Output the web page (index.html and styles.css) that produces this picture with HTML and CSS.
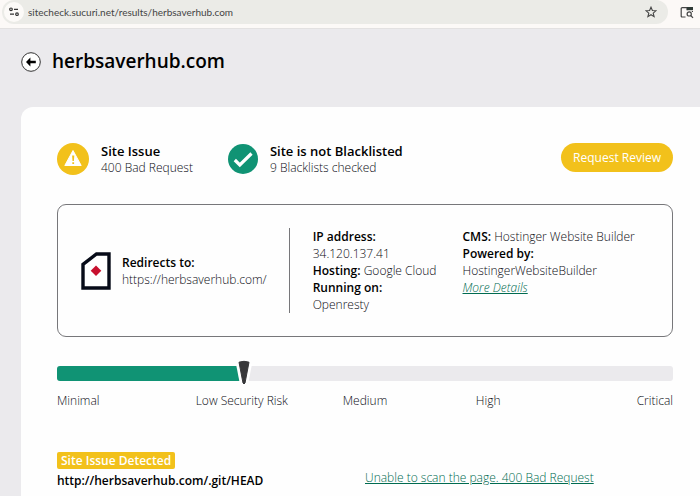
FILE: index.html
```html
<!DOCTYPE html>
<html lang="en">
<head>
<meta charset="utf-8">
<meta name="viewport" content="width=device-width, initial-scale=1">
<title>herbsaverhub.com</title>
<link rel="stylesheet" href="styles.css">
</head>
<body>
<header class="toolbar">
  <form class="omnibox">
    <button class="icon-button site-info" type="button" aria-label="View site information">
      <svg width="10" height="10" viewBox="0 0 10 10" fill="none" stroke="#333" stroke-width="1.2"><circle cx="2" cy="2.3" r="1.3"/><path d="M5 2.3h4M1 7.2h4"/><circle cx="8" cy="7.2" r="1.3"/></svg>
    </button>
    <input class="address" type="text" aria-label="Address" value="sitecheck.sucuri.net/results/herbsaverhub.com">
    <button class="icon-button" type="button" aria-label="Bookmark this page">
      <svg width="12" height="12" viewBox="0 0 12 12" fill="none" stroke="#444" stroke-width="1.1"><path d="M6 1.2 7.4 4.5 10.9 4.8 8.2 7.1 9.1 10.6 6 8.7 2.9 10.6 3.8 7.1 1.1 4.8 4.6 4.5Z"/></svg>
    </button>
  </form>
  <button class="icon-button" type="button" aria-label="Search this page">
    <svg width="14" height="13" viewBox="0 0 14 13" fill="none" stroke="#444" stroke-width="1.2"><path d="M5.5 11H2.2Q1.2 11 1.2 10V2.6Q1.2 1.6 2.2 1.6H12.4V4M7 1.6V4.2M12.4 5V6"/><path d="M7 1H13V4.2H7Z" fill="#2f3a36" stroke="none"/><circle cx="9.2" cy="7.9" r="2.1"/><path d="m10.7 9.5 2.3 2.4"/></svg>
  </button>
</header>
<div class="site-heading">
  <a class="back" href="#" aria-label="Back">
    <svg width="20" height="20" viewBox="0 0 20 20"><circle cx="10" cy="10" r="9.3" fill="#fff" stroke="#333" stroke-width="1"/><path d="M5 10 9.4 5.6V8.7H14.8V11.3H9.4V14.4Z"/></svg>
  </a>
  <h1>herbsaverhub.com</h1>
</div>
<main class="report">
  <section class="summary">
    <div class="status status-issue">
      <svg width="32" height="32" viewBox="0 0 32 32"><circle cx="16" cy="16" r="16" fill="#f2c11b"/><path d="M16 7.5 24.2 22.5H7.8Z" fill="#fff" stroke="#fff" stroke-linejoin="round"/><path d="M15.1 12.5H17.3L16.9 18H15.5ZM15.3 19.2H17.1V21H15.3Z" fill="#f2c11b"/></svg>
      <div><h2>Site Issue</h2><p>400 Bad Request</p></div>
    </div>
    <div class="status">
      <svg width="30" height="30" viewBox="0 0 30 30"><circle cx="15" cy="15" r="15" fill="#109374"/><path d="m6.8 16 5 5L23.5 9.5" fill="none" stroke="#fff" stroke-width="3.2"/></svg>
      <div><h2>Site is not Blacklisted</h2><p>9 Blacklists checked</p></div>
    </div>
    <button class="review" type="button">Request Review</button>
  </section>
  <section class="details">
    <div class="redirect">
      <svg width="30" height="38" viewBox="0 0 30 38"><path d="M2 12.3 15.5 2H28V36H2Z" fill="#fff" stroke="#070b18" stroke-width="3.4"/><path d="m15 13.5 5.3 5.3-5.3 5.3-5.3-5.3Z" fill="#c8102e"/></svg>
      <p><b>Redirects to:</b><br>https://herbsaverhub.com/</p>
    </div>
    <p class="hosting"><b>IP address:</b><br>34.120.137.41<br><b>Hosting:</b> Google Cloud<br><b>Running on:</b><br>Openresty</p>
    <p><b>CMS:</b> Hostinger Website Builder<br><b>Powered by:</b><br>HostingerWebsiteBuilder<br><a class="more" href="#">More Details</a></p>
  </section>
  <section class="risk" aria-label="Security risk">
    <div class="track">
      <div class="fill"></div>
      <svg class="marker" width="16" height="26" viewBox="0 0 16 26"><path d="M0 4H16L12.5 22H3.5Z" fill="#fff"/><path d="M3 2.2Q8 .4 13 2.2L9 23Q8 25 7 23Z" fill="#38383a" stroke="#38383a" stroke-linejoin="round"/></svg>
    </div>
    <ul class="levels"><li>Minimal</li><li>Low Security Risk</li><li>Medium</li><li>High</li><li>Critical</li></ul>
  </section>
  <section class="finding">
    <div><span class="badge">Site Issue Detected</span><h3>http://herbsaverhub.com/.git/HEAD</h3></div>
    <a href="#">Unable to scan the page. 400 Bad Request</a>
  </section>
</main>
</body>
</html>
```
FILE: styles.css
```css
* {
  box-sizing: border-box;
}

body {
  display: flex;
  flex-direction: column;
  min-height: 100vh;
  margin: 0;
  background: #ebeaed;
  color: #0c0c14;
  font: 300 12px/17px "Open Sans", "Noto Sans", sans-serif;
}

h1, h2, h3, p, ul {
  margin: 0;
  padding: 0;
}

h1, h2, h3, b {
  color: #000;
}

b {
  font-weight: 600;
}

button, input {
  border: 0;
  background: none;
  font: inherit;
  color: inherit;
}

svg {
  display: block;
  flex: none;
}

a {
  color: #006b50;
}

.toolbar {
  display: flex;
  align-items: center;
  gap: 12px;
  height: 29px;
  padding: 0 6px 4px 2px;
  border-bottom: 1px solid #e3e1e1;
  background: #fcf9f7;
}

.omnibox {
  display: flex;
  flex: 1;
  align-items: center;
  height: 24px;
  padding: 0 11px 0 2px;
  border-radius: 12px;
  background: #ebebe7;
}

.icon-button {
  padding: 0;
}

.site-info {
  display: grid;
  place-items: center;
  width: 20px;
  height: 20px;
  border-radius: 50%;
  background: #fcfaf8;
}

.address {
  flex: 1;
  min-width: 0;
  padding: 0 4px;
  color: #444;
  font: 10px/16px Lato, "Open Sans", sans-serif;
}

.site-heading {
  display: flex;
  align-items: center;
  gap: 11px;
  padding: 17px 21px 30px;
}

h1 {
  font: 600 19px/31px "Open Sans", sans-serif;
}

.report {
  flex: 1;
  padding: 36px 27px 6px 36px;
  margin-left: 21px;
  border-top-left-radius: 12px;
  background: #fefefe;
}

.summary {
  display: flex;
  align-items: flex-start;
}

.status {
  display: flex;
  align-items: center;
  gap: 12px;
}

.status-issue {
  margin-right: 35px;
}

h2 {
  font: 600 13px/17px "Open Sans", sans-serif;
}

.status p {
  line-height: 15px;
}

.review {
  height: 29px;
  margin-left: auto;
  padding: 0 12px;
  border-radius: 15px;
  background: #f2c11b;
  color: #fff;
  font-weight: 400;
}

.details {
  display: flex;
  align-items: flex-start;
  gap: 23px;
  margin-top: 29px;
  padding: 23px;
  border: 1px solid #77777a;
  border-radius: 9px;
}

.redirect {
  display: flex;
  align-items: center;
  align-self: stretch;
  gap: 11px;
  padding-right: 22px;
  border-right: 1px solid #77777a;
}

.hosting {
  padding-right: 3px;
}

.more {
  font-style: italic;
}

.risk {
  margin-top: 29px;
}

.track {
  position: relative;
  height: 15px;
  border-radius: 3px;
  background: #ebeaed;
}

.fill {
  width: 30%;
  height: 100%;
  border-radius: 3px 0 0 3px;
  background: #109374;
}

.marker {
  position: absolute;
  top: -6px;
  left: 29%;
}

.levels {
  display: grid;
  grid-template-columns: repeat(5, 1fr);
  margin-top: 11px;
  list-style: none;
  text-align: center;
}

.levels li:first-child {
  text-align: left;
}

.levels li:last-child {
  text-align: right;
}

.finding {
  display: grid;
  grid-template-columns: 1fr 1fr;
  align-items: center;
  margin-top: 43px;
}

.badge {
  display: inline-block;
  padding: 0 4px;
  border-radius: 2px;
  background: #f2c11b;
  color: #fff;
  font-weight: 600;
}

h3 {
  margin-top: 3px;
  font: 600 12px/17px "Open Sans", sans-serif;
}

.finding a {
  padding-top: 14px;
}
```
